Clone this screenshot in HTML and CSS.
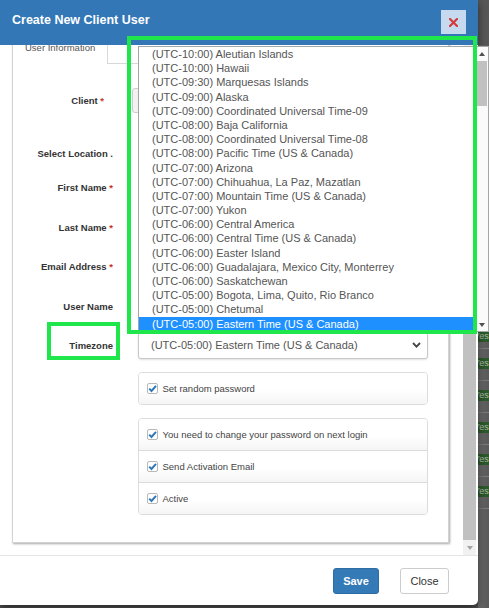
FILE: index.html
```html
<!DOCTYPE html>
<html>
<head>
<meta charset="utf-8">
<title>Create New Client User</title>
<link rel="stylesheet" href="styles.css">
</head>
<body>
<div class="page">
  <div class="modal">
    <div class="modal-header">
      <h4 class="modal-title">Create New Client User</h4>
      <button class="btn-x" type="button" aria-label="Close">
        <svg width="9" height="9" viewBox="0 0 9 9"><path d="M1 1 L8 8 M8 1 L1 8" stroke="#d33c3c" stroke-width="2.2" stroke-linecap="square"/></svg>
      </button>
    </div>
    <div class="modal-body">
      <div class="scroll-area">
        <div class="panel">
          <div class="tabs">
            <div class="tab active">User Information</div>
            <div class="tab-rest"></div>
          </div>
          <div class="tab-content">
            <div class="row">
              <div class="lbl lbl-client">Client <span class="req">*</span></div>
              <div class="client-box"></div>
            </div>
            <div class="row row-loc">
              <div class="lbl">Select Location .</div>
              <div class="field"></div>
            </div>
            <div class="row row-first">
              <div class="lbl">First Name <span class="req">*</span></div>
              <div class="field"></div>
            </div>
            <div class="row row-gap12">
              <div class="lbl">Last Name <span class="req">*</span></div>
              <div class="field"></div>
            </div>
            <div class="row row-gap11">
              <div class="lbl">Email Address <span class="req">*</span></div>
              <div class="field"></div>
            </div>
            <div class="row row-gap12">
              <div class="lbl">User Name</div>
              <div class="field"></div>
            </div>
            <div class="row row-gap11">
              <div class="lbl">Timezone</div>
              <div class="select">
                <span>(UTC-05:00) Eastern Time (US &amp; Canada)</span>
                <svg width="9" height="6" viewBox="0 0 9 6"><polyline points="1,1 4.5,4.6 8,1" fill="none" stroke="#444" stroke-width="1.8"/></svg>
              </div>
            </div>
            <div class="chk-group">
              <div class="chk-row">
                <svg class="cb" width="11" height="11" viewBox="0 0 11 11"><rect x="0.5" y="0.5" width="10" height="10" rx="1.5" fill="#fff" stroke="#b8b8b8"/><path d="M2.2 5.6 L4.5 8 L9 2.8" fill="none" stroke="#2f78b8" stroke-width="2"/></svg>
                <span>Set random password</span>
              </div>
            </div>
            <div class="chk-group">
              <div class="chk-row">
                <svg class="cb" width="11" height="11" viewBox="0 0 11 11"><rect x="0.5" y="0.5" width="10" height="10" rx="1.5" fill="#fff" stroke="#b8b8b8"/><path d="M2.2 5.6 L4.5 8 L9 2.8" fill="none" stroke="#2f78b8" stroke-width="2"/></svg>
                <span>You need to change your password on next login</span>
              </div>
              <div class="chk-row">
                <svg class="cb" width="11" height="11" viewBox="0 0 11 11"><rect x="0.5" y="0.5" width="10" height="10" rx="1.5" fill="#fff" stroke="#b8b8b8"/><path d="M2.2 5.6 L4.5 8 L9 2.8" fill="none" stroke="#2f78b8" stroke-width="2"/></svg>
                <span>Send Activation Email</span>
              </div>
              <div class="chk-row">
                <svg class="cb" width="11" height="11" viewBox="0 0 11 11"><rect x="0.5" y="0.5" width="10" height="10" rx="1.5" fill="#fff" stroke="#b8b8b8"/><path d="M2.2 5.6 L4.5 8 L9 2.8" fill="none" stroke="#2f78b8" stroke-width="2"/></svg>
                <span>Active</span>
              </div>
            </div>
          </div>
        </div>
      </div>
      <div class="vscroll">
        <div class="vthumb"></div>
        <div class="varrow"><span class="tri-down"></span></div>
      </div>
    </div>
    <div class="modal-footer">
      <button class="btn btn-save" type="button">Save</button>
      <button class="btn btn-close" type="button">Close</button>
    </div>
  </div>

  <div class="behind">
    <div class="bh-top"></div>
    <div class="bh-hidden"></div>
    <div class="yrow yrow-first"><span class="badge">Yes</span></div>
    <div class="yrow"><span class="badge">Yes</span></div>
    <div class="yrow"><span class="badge">Yes</span></div>
    <div class="yrow"><span class="badge">Yes</span></div>
    <div class="yrow"><span class="badge">Yes</span></div>
    <div class="yrow"><span class="badge">Yes</span></div>
  </div>

  <div class="dropdown">
    <ul class="options">
      <li>(UTC-10:00) Aleutian Islands</li>
      <li>(UTC-10:00) Hawaii</li>
      <li>(UTC-09:30) Marquesas Islands</li>
      <li>(UTC-09:00) Alaska</li>
      <li>(UTC-09:00) Coordinated Universal Time-09</li>
      <li>(UTC-08:00) Baja California</li>
      <li>(UTC-08:00) Coordinated Universal Time-08</li>
      <li>(UTC-08:00) Pacific Time (US &amp; Canada)</li>
      <li>(UTC-07:00) Arizona</li>
      <li>(UTC-07:00) Chihuahua, La Paz, Mazatlan</li>
      <li>(UTC-07:00) Mountain Time (US &amp; Canada)</li>
      <li>(UTC-07:00) Yukon</li>
      <li>(UTC-06:00) Central America</li>
      <li>(UTC-06:00) Central Time (US &amp; Canada)</li>
      <li>(UTC-06:00) Easter Island</li>
      <li>(UTC-06:00) Guadalajara, Mexico City, Monterrey</li>
      <li>(UTC-06:00) Saskatchewan</li>
      <li>(UTC-05:00) Bogota, Lima, Quito, Rio Branco</li>
      <li>(UTC-05:00) Chetumal</li>
      <li class="selected">(UTC-05:00) Eastern Time (US &amp; Canada)</li>
    </ul>
    <div class="dd-scroll">
      <div class="dd-arrow"><span class="tri-up"></span></div>
      <div class="dd-thumb"></div>
      <div class="dd-space"></div>
      <div class="dd-arrow"><span class="tri-down dark"></span></div>
    </div>
  </div>

  <div class="mark mark-list"></div>
  <div class="mark mark-tz"></div>
</div>
</body>
</html>
```

FILE: styles.css
```css
* { box-sizing: border-box; }
html, body { margin: 0; padding: 0; }
body {
  font-family: "Liberation Sans", Arial, sans-serif;
  background: #4f4f4f;
  width: 489px;
  height: 608px;
  overflow: hidden;
}
.page {
  position: relative;
  display: flex;
  align-items: flex-start;
  width: 489px;
  height: 608px;
}

/* modal */
.modal {
  flex: 0 0 478px;
  height: 605px;
  background: #fff;
  display: flex;
  flex-direction: column;
  border-radius: 0 0 5px 0;
  box-shadow: 0 3px 9px rgba(0,0,0,.5);
  position: relative;
  z-index: 1;
}
.modal-header {
  flex: 0 0 45px;
  background: #3377b7;
  display: flex;
  align-items: flex-start;
  justify-content: space-between;
  padding: 0 12px;
  position: relative;
  z-index: 2;
}
.modal-title {
  margin: 13px 0 0 0;
  color: #fff;
  font-size: 12.5px;
  font-weight: bold;
  line-height: 14px;
}
.btn-x {
  width: 25px;
  height: 24px;
  margin-top: 10px;
  background: #c6d9ee;
  border: 0;
  padding: 0;
  display: flex;
  align-items: center;
  justify-content: center;
}
.modal-body {
  flex: 0 0 510px;
  display: flex;
  overflow: hidden;
}
.scroll-area {
  flex: 1;
  padding: 0 14px 0 12px;
}
.panel {
  margin-top: -10px;
  height: 508px;
  border: 1px solid #d3d3d3;
  box-shadow: 1px 1px 2px rgba(0,0,0,.35);
  display: flex;
  flex-direction: column;
}
.tabs {
  display: flex;
  height: 28px;
  flex: 0 0 28px;
}
.tab.active {
  width: 95px;
  border-right: 1px solid #d8d8d8;
  font-size: 9.5px;
  color: #555;
  line-height: 12px;
  padding: 5.5px 0 0 12px;
}
.tab-rest {
  flex: 1;
  border-bottom: 1px solid #d8d8d8;
}
.tab-content {
  flex: 1;
  padding: 22px 20px 0 0;
}
.row {
  display: flex;
  align-items: center;
  height: 28px;
}
.row-loc { margin-top: 25px; }
.row-first { margin-top: 6px; }
.row-gap12 { margin-top: 12px; }
.row-gap11 { margin-top: 11px; }
.lbl {
  width: 100px;
  flex: 0 0 100px;
  text-align: right;
  font-size: 9.5px;
  font-weight: bold;
  color: #333;
}
.lbl-client { padding-right: 9px; }
.req { color: #c9302c; }
.client-box {
  margin-left: 19px;
  width: 296px;
  height: 25px;
  border: 1px solid #ccc;
  border-radius: 3px;
  background: #f2f2f2;
}
.field {
  margin-left: 25px;
  width: 290px;
  height: 27px;
  border: 1px solid #ccc;
  border-radius: 3px;
  background: #fff;
}
.select {
  margin-left: 25px;
  width: 290px;
  height: 27px;
  border: 1px solid #c8c8c8;
  border-radius: 3px;
  background: #fff;
  box-shadow: 0 1px 2px rgba(0,0,0,.12);
  display: flex;
  align-items: center;
  justify-content: space-between;
  padding: 0 6px 0 12px;
  font-size: 11px;
  color: #555;
}
.chk-group {
  margin: 13px 0 0 125px;
  width: 290px;
  border: 1px solid #dcdcdc;
  border-radius: 4px;
  overflow: hidden;
}
.chk-group + .chk-group { margin-top: 13px; }
.chk-row {
  height: 31px;
  display: flex;
  align-items: center;
  padding-left: 8px;
  font-size: 9.5px;
  color: #444;
  background: linear-gradient(#fff 55%, #f5f5f5);
}
.chk-group .chk-row + .chk-row {
  border-top: 1px solid #dcdcdc;
  height: 32px;
}
.cb { margin-right: 4.5px; flex: 0 0 11px; }

.vscroll {
  flex: 0 0 13px;
  margin-right: 2px;
  display: flex;
  flex-direction: column;
  background: #f1f1f1;
}
.vthumb {
  flex: 1;
  margin-top: 16px;
  background: #c1c1c1;
}
.varrow {
  flex: 0 0 15px;
  display: flex;
  align-items: center;
  justify-content: center;
}
.tri-down {
  width: 0; height: 0;
  border-left: 3.5px solid transparent;
  border-right: 3.5px solid transparent;
  border-top: 4px solid #a3a3a3;
}
.tri-down.dark { border-top-color: #505050; }
.tri-up {
  width: 0; height: 0;
  border-left: 3.5px solid transparent;
  border-right: 3.5px solid transparent;
  border-bottom: 4px solid #505050;
}

.modal-footer {
  flex: 1;
  border-top: 1px solid #e5e5e5;
  display: flex;
  justify-content: flex-end;
  align-items: flex-start;
  gap: 21px;
  padding: 12px 29px 0 0;
}
.btn {
  height: 26px;
  border-radius: 3px;
  font-family: "Liberation Sans", Arial, sans-serif;
  font-size: 11px;
  padding: 0;
}
.btn-save {
  width: 46px;
  background: #337ab7;
  border: 1px solid #2e6da4;
  color: #fff;
  font-weight: bold;
}
.btn-close {
  width: 49px;
  background: #fff;
  border: 1px solid #ccc;
  color: #333;
}

/* page behind the modal */
.behind {
  flex: 0 0 11px;
  height: 608px;
  background: linear-gradient(90deg, #6c6c6c, #595959);
  overflow: hidden;
  display: flex;
  flex-direction: column;
}
.bh-top { flex: 0 0 45px; background: #575757; }
.bh-hidden { flex: 0 0 285px; }
.yrow {
  flex: 0 0 32px;
  border-bottom: 1px solid #7a7a7a;
  padding-top: 9px;
}
.yrow-first { flex: 0 0 19px; padding-top: 1px; }
.badge {
  display: block;
  height: 11px;
  background: #2d5a2d;
  color: #a8bca8;
  font-size: 9px;
  line-height: 11px;
  margin-left: -5px;
  padding-left: 1px;
  white-space: nowrap;
}

/* open select list */
.dropdown {
  position: absolute;
  left: 138px;
  top: 46px;
  width: 351px;
  height: 286px;
  background: #fff;
  border: 1px solid #a5a5a5;
  display: flex;
  z-index: 5;
  overflow: hidden;
}
.options {
  flex: 1;
  list-style: none;
  margin: 0;
  padding: 0;
}
.options li {
  height: 14.2px;
  line-height: 14.2px;
  padding-left: 13px;
  font-size: 11px;
  color: #555;
  white-space: nowrap;
}
.options li.selected {
  background: #1e90ff;
  color: #fff;
}
.dd-scroll {
  flex: 0 0 13px;
  display: flex;
  flex-direction: column;
  background: #fafafa;
}
.dd-arrow {
  flex: 0 0 13px;
  display: flex;
  align-items: center;
  justify-content: center;
}
.dd-thumb {
  flex: 0 0 45px;
  margin: 1px 1px 0 1px;
  background: #c1c1c1;
}
.dd-space { flex: 1; }

/* green highlight annotations */
.mark {
  position: absolute;
  border: 4px solid #1fe64b;
  z-index: 6;
}
.mark-list { left: 127px; top: 36px; width: 350px; height: 298px; }
.mark-tz { left: 47px; top: 322px; width: 73px; height: 38px; }
```
